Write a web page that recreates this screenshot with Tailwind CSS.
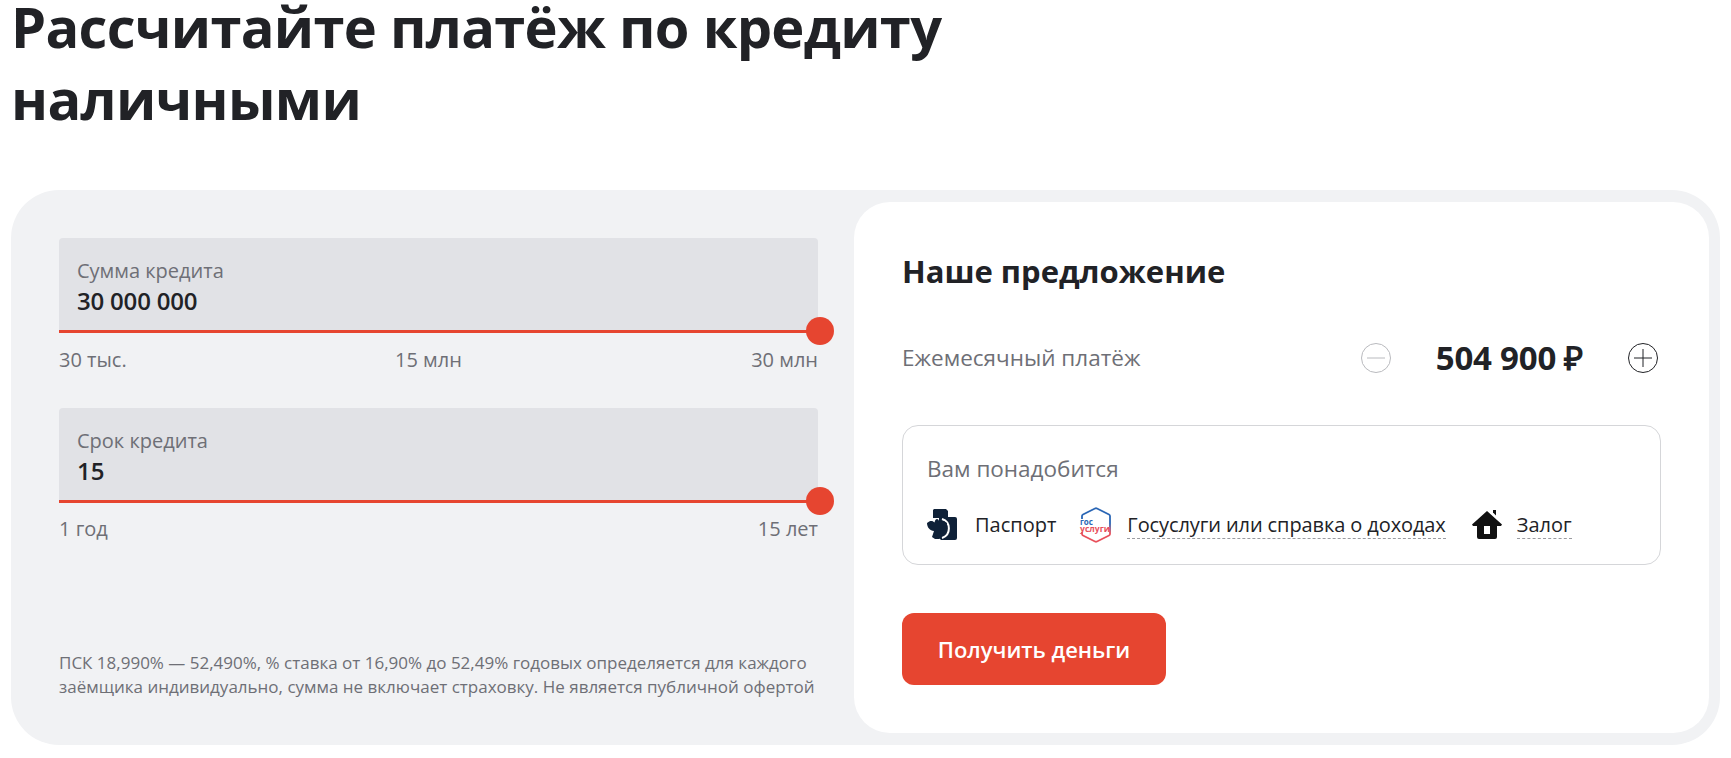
<!doctype html>
<html lang="ru"><head><meta charset="utf-8"><script src="https://cdn.jsdelivr.net/npm/@tailwindcss/browser@4"></script></head>
<body class="bg-white overflow-hidden font-['Open_Sans',sans-serif] text-[#212226]">
<div class="w-[1731px] h-[758px] pl-[11px] pr-[11px]">
  <h1 class="text-[56px] leading-[72px] font-bold tracking-[-0.7px] w-[1000px] -mt-[10px] h-[200px]">Рассчитайте платёж по кредиту наличными</h1>
  <div class="flex h-[555px] rounded-[48px] bg-[#f1f2f4] p-[12px] pl-[48px]">
    <div class="w-[759px] flex flex-col pt-[36px] relative">
      <div class="relative h-[95px] w-[759px] bg-[#e1e2e6] rounded-t-[4px] border-b-[3px] border-[#e64530] pl-[18px] pt-[19px]">
        <div class="text-[20px] leading-[28px] text-[#6e6f76]">Сумма кредита</div>
        <div class="text-[24px] leading-[32px] font-semibold tracking-[-0.2px]">30 000 000</div>
        <span class="absolute -right-[16px] -bottom-[15px] w-[28px] h-[28px] rounded-full bg-[#e64530]"></span>
      </div>
      <div class="flex justify-between w-[759px] mt-[13px] text-[20px] leading-[28px] text-[#6e6f76]"><span>30 тыс.</span><span class="mr-[21px]">15 млн</span><span>30 млн</span></div>
      <div class="relative mt-[34px] h-[95px] w-[759px] bg-[#e1e2e6] rounded-t-[4px] border-b-[3px] border-[#e64530] pl-[18px] pt-[19px]">
        <div class="text-[20px] leading-[28px] text-[#6e6f76]">Срок кредита</div>
        <div class="text-[24px] leading-[32px] font-semibold">15</div>
        <span class="absolute -right-[16px] -bottom-[15px] w-[28px] h-[28px] rounded-full bg-[#e64530]"></span>
      </div>
      <div class="flex justify-between w-[759px] mt-[12px] text-[20px] leading-[28px] text-[#6e6f76]"><span>1 год</span><span>15 лет</span></div>
      <p class="mt-auto mb-[34px] text-[17px] leading-[24px] text-[#6e6f76] whitespace-nowrap">ПСК 18,990% — 52,490%, % ставка от 16,90% до 52,49% годовых определяется для каждого<br>заёмщика индивидуально, сумма не включает страховку. Не является публичной офертой</p>
    </div>
    <div class="ml-[36px] flex-1 bg-white rounded-[36px] pl-[48px] pr-[48px] pt-[49px]">
      <h2 class="text-[31px] leading-[40px] font-bold">Наше предложение</h2>
      <div class="flex items-center mt-[51px] h-[32px] w-[756px]">
        <span class="text-[22.5px] text-[#6e6f76]">Ежемесячный платёж</span>
        <svg class="ml-auto" width="30" height="30" viewBox="0 0 30 30" fill="none" stroke="#b9babe" stroke-width="1"><circle cx="15" cy="15" r="14.500"/><path d="M6 15h18"/></svg>
        <span class="w-[237px] text-center text-[33px] leading-[40px] font-bold tracking-[-0.2px]">504 900 ₽</span>
        <svg width="30" height="30" viewBox="0 0 30 30" fill="none" stroke="#212226" stroke-width="1"><circle cx="15" cy="15" r="14.500"/><path d="M6 15h18M15 6v18"/></svg>
      </div>
      <div class="mt-[51px] h-[140px] w-[759px] border border-[#d5d6d9] rounded-[16px] pl-[24px] pt-[29px]">
        <div class="text-[22.5px] leading-[28px] text-[#6e6f76]">Вам понадобится</div>
        <div class="flex items-center mt-[24px] text-[20px] h-[36px] text-[#212226]">
          <svg width="30" height="32" viewBox="0 0 30 32">
            <path fill="#0f2138" d="M7 0H19l2 2V8H28a2 2 0 0 1 2 2V29a2 2 0 0 1-2 2H14L12 29V9H6V1z"/>
            <path fill="none" stroke="#fff" stroke-width="2" d="M15 10A10 10 0 0 1 15 29"/>
            <path fill="#0f2138" d="M0 14c3-3 6-2.500 7.500-.5C8 11 9 10 10 10s2 1 2.500 3.500C14 11.500 17 11 20 14c0 4.500-3 7.500-7 8l2 6-3 2h-4l-3-2 2-6C3 21.500 0 18.500 0 14z"/>
          </svg>
          <span class="ml-[18px]">Паспорт</span>
          <svg class="ml-[23px]" width="34" height="36" viewBox="0 0 34 36" fill="none"><defs><linearGradient id="gos" x1="0" y1="0" x2="0" y2="1"><stop offset="0.450" stop-color="#2a66b5"/><stop offset="0.750" stop-color="#e8505b"/></linearGradient></defs><path d="M3 12V9q0-1 1-1.500L16 1.500q1-.5 2 0L30 7.500q1 .5 1 1.500V27q0 1-1 1.500L18 34.500q-1 .5-2 0L4 28.500q-1-.5-1-1.500V25" stroke="url(#gos)" stroke-width="1.800"/><text x="1" y="17.500" font-size="8" font-weight="700" fill="#2a66b5" font-family="Open Sans">гос</text><text x="1" y="25" font-size="8" font-weight="700" fill="#e8505b" font-family="Open Sans" textLength="30" lengthAdjust="spacingAndGlyphs">услуги</text></svg>
          <span class="ml-[14px] border-b border-dashed border-[#9a9ba0] leading-[26px] tracking-[-0.1px]">Госуслуги или справка о доходах</span>
          <svg class="ml-[26px]" width="30" height="30" viewBox="0 0 30 30"><path fill="#111" fill-rule="evenodd" d="M15 1L0 14.500 1 16H5V27a2 2 0 0 0 2 2H23a2 2 0 0 0 2-2V16H29L30 14.500zM12 16h6v8h-6z"/><path fill="#111" d="M21 0h3v5.500l-3-3z"/></svg>
          <span class="ml-[15px] border-b border-dashed border-[#9a9ba0] leading-[26px]">Залог</span>
        </div>
      </div>
      <button class="mt-[48px] w-[264px] h-[72px] rounded-[12px] bg-[#e64530] text-white text-[22px] font-semibold block">Получить деньги</button>
    </div>
  </div>
</div>
</body></html>
